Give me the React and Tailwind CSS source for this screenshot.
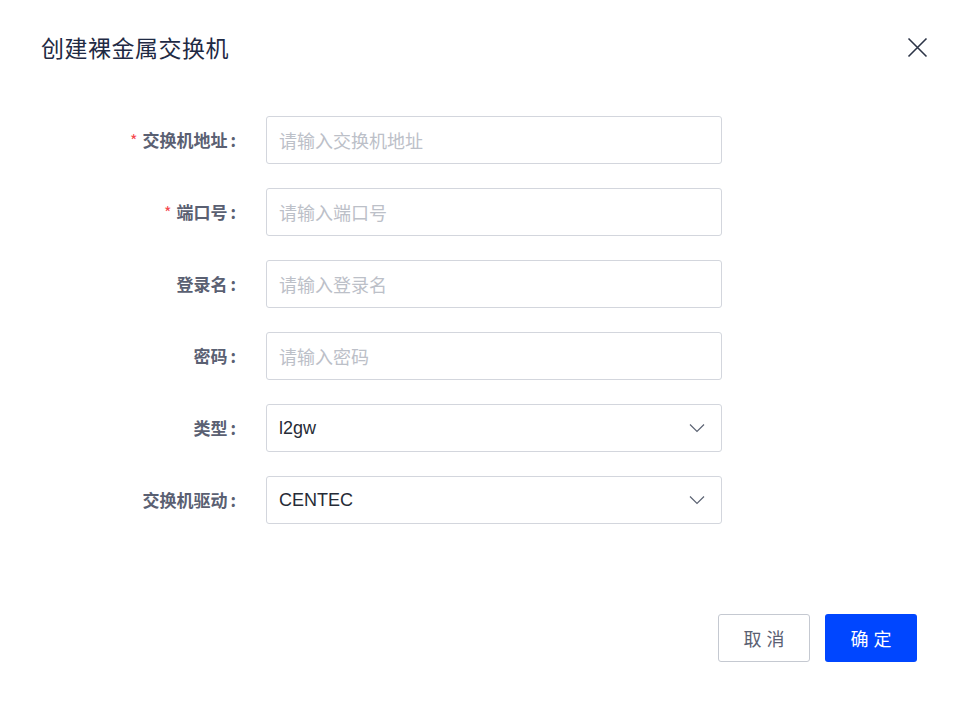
import React from "react";

const font = { fontFamily: '"Noto Sans CJK SC", "Noto Sans", sans-serif' };

function Chevron() {
  return (
    <svg width="16" height="10" viewBox="0 0 16 10" fill="none" className="shrink-0">
      <path d="M1 1.5 L8 8.5 L15 1.5" stroke="#5c6373" strokeWidth="1.2" />
    </svg>
  );
}

function Row({ label, required, placeholder, value, select }) {
  return (
    <div className="flex items-center h-12">
      <div className="w-[238px] shrink-0 flex justify-end items-center text-[17px] font-bold text-[#5a6072]">
        {required && <span className="text-[#f5484f] mr-[5px] font-normal text-[16px]">*</span>}
        <span>{label}</span>
        <span className="ml-[3px] mr-[2px]">:</span>
      </div>
      <div className="ml-[28px] w-[456px] h-12 border border-[#d3d6dd] rounded-[3px] flex items-center justify-between pl-[12px] pr-[16px] bg-white">
        {value ? (
          <span className="text-[18px] text-[#262b36]" style={{ fontFamily: '"Liberation Sans", Arial, sans-serif' }}>{value}</span>
        ) : (
          <span className="text-[18px] text-[#bcc0c8]">{placeholder}</span>
        )}
        {select && <Chevron />}
      </div>
    </div>
  );
}

export default function App() {
  return (
    <div className="w-[957px] h-[702px] bg-white relative" style={font}>
      <div className="flex items-center justify-between pl-[41px] pr-[29px] pt-[30px] h-[64px]">
        <h1 className="text-[23px] text-[#1f2a44] font-normal tracking-[0.5px]">创建裸金属交换机</h1>
        <svg width="21" height="21" viewBox="0 0 21 21" fill="none">
          <path d="M1.5 1.5 L19.5 19.5 M19.5 1.5 L1.5 19.5" stroke="#2c3447" strokeWidth="1.6" />
        </svg>
      </div>
      <div className="flex flex-col gap-6 mt-[52px]">
        <Row label="交换机地址" required placeholder="请输入交换机地址" />
        <Row label="端口号" required placeholder="请输入端口号" />
        <Row label="登录名" placeholder="请输入登录名" />
        <Row label="密码" placeholder="请输入密码" />
        <Row label="类型" value="l2gw" select />
        <Row label="交换机驱动" value="CENTEC" select />
      </div>
      <div className="flex justify-end gap-[15px] pr-[40px] mt-[90px]">
        <button className="w-[92px] h-12 border border-[#c5c9d1] rounded-[3px] text-[18px] text-[#5a6072] bg-white tracking-[5px] pl-[5px]">取消</button>
        <button className="w-[92px] h-12 rounded-[3px] text-[18px] text-white bg-[#0046ff] tracking-[5px] pl-[5px]">确定</button>
      </div>
    </div>
  );
}
